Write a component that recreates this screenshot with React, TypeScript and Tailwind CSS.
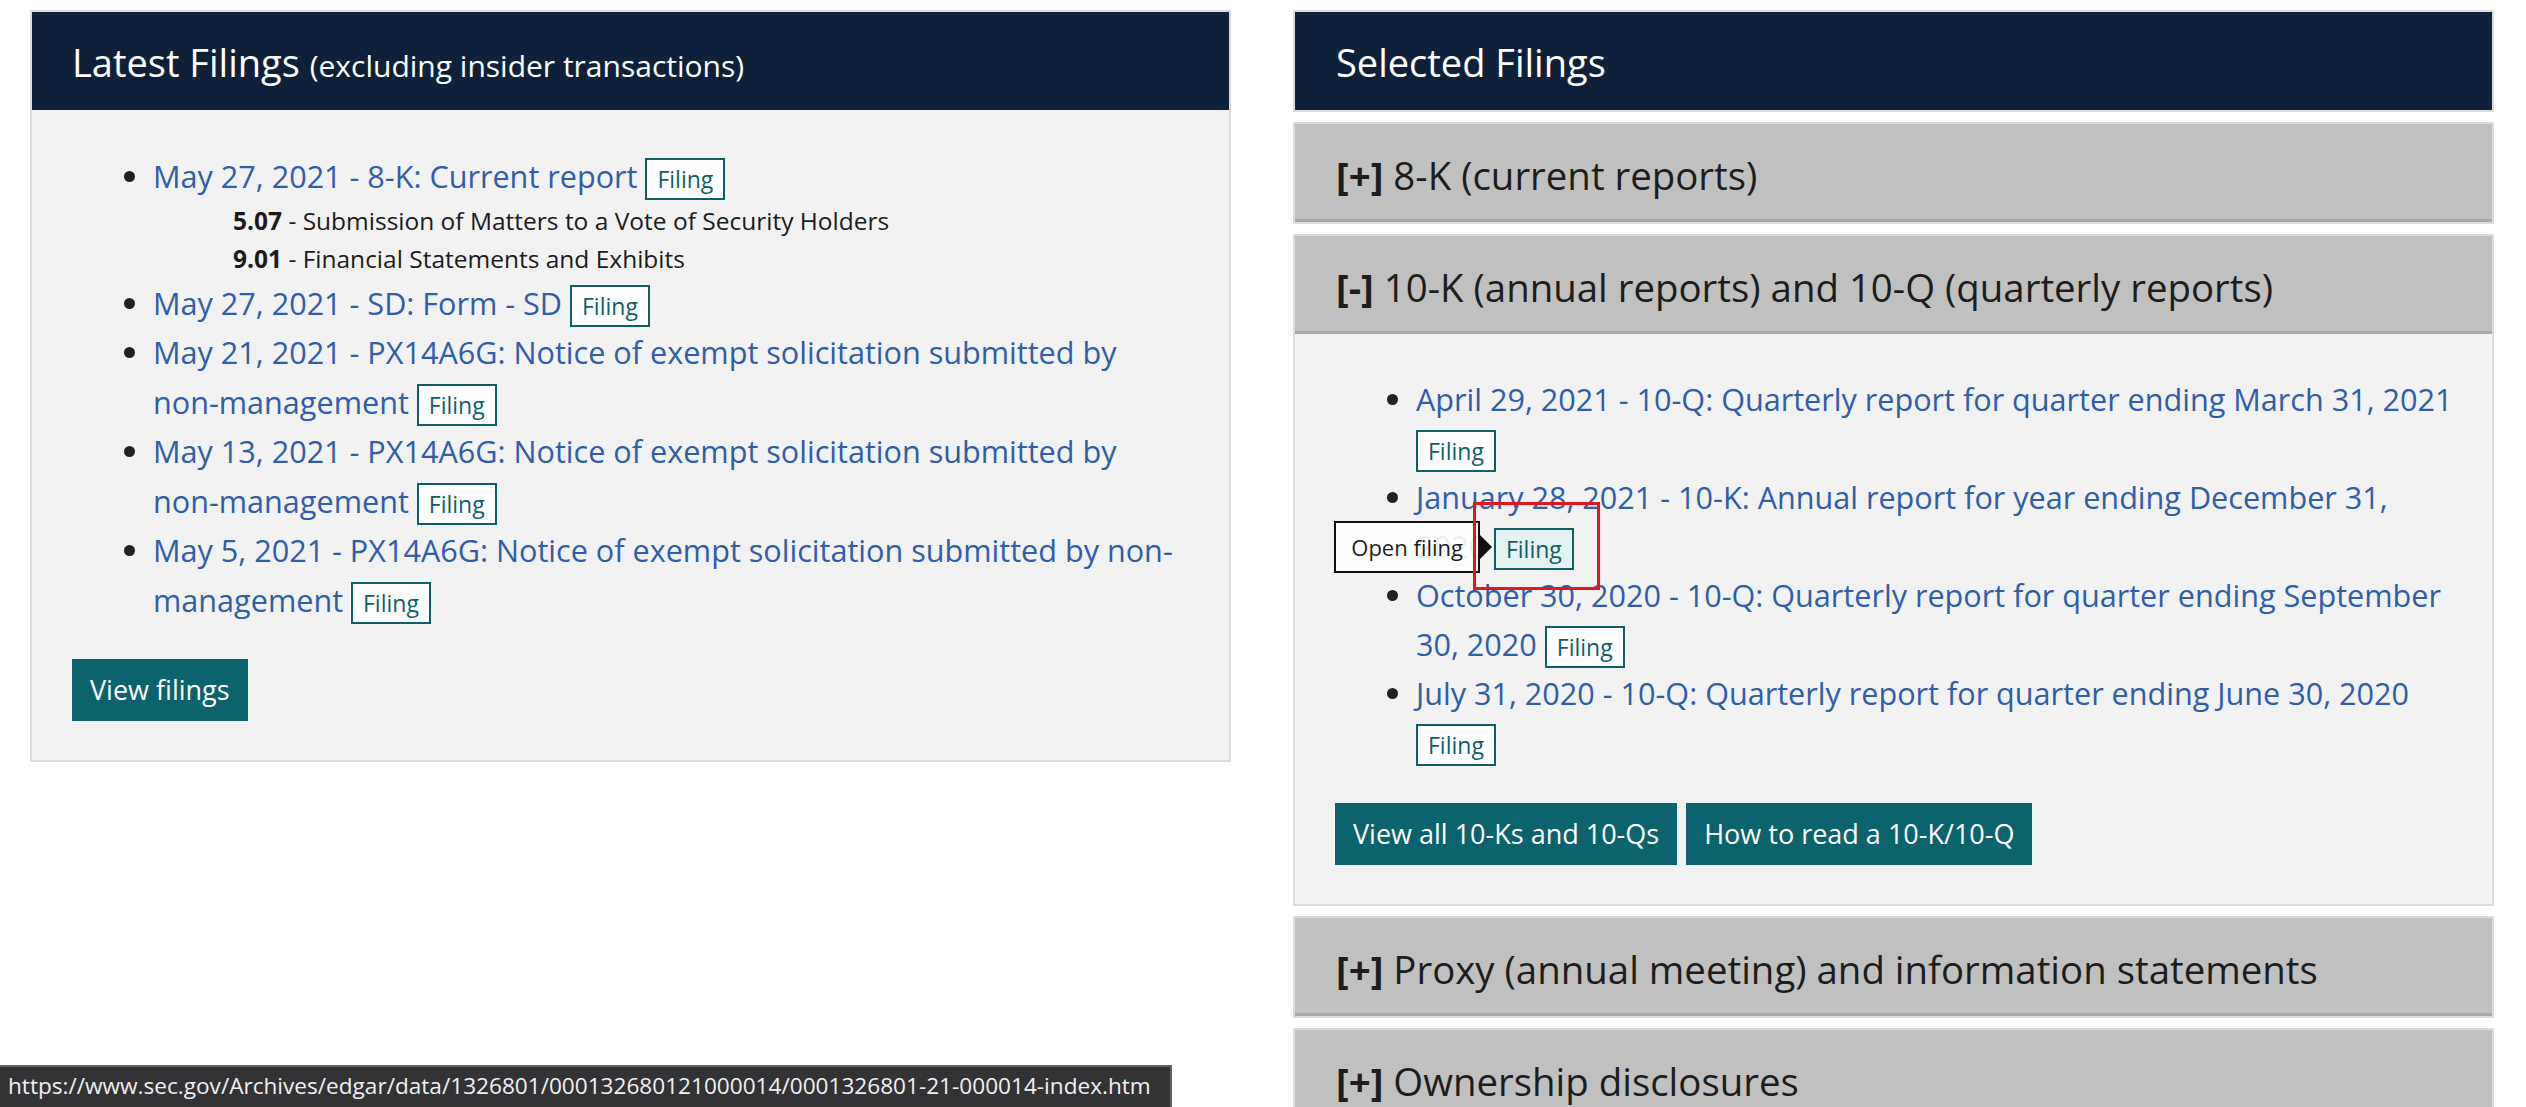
import React from "react";

type Latest = { text: string; items?: [string, string][] };

const latestFilings: Latest[] = [
  {
    text: "May 27, 2021 - 8-K: Current report",
    items: [
      ["5.07", "Submission of Matters to a Vote of Security Holders"],
      ["9.01", "Financial Statements and Exhibits"],
    ],
  },
  { text: "May 27, 2021 - SD: Form - SD" },
  { text: "May 21, 2021 - PX14A6G: Notice of exempt solicitation submitted by non-management" },
  { text: "May 13, 2021 - PX14A6G: Notice of exempt solicitation submitted by non-management" },
  { text: "May 5, 2021 - PX14A6G: Notice of exempt solicitation submitted by non-management" },
];

const annualFilings = [
  { text: "April 29, 2021 - 10-Q: Quarterly report for quarter ending March 31, 2021" },
  { text: "January 28, 2021 - 10-K: Annual report for year ending December 31, 2020", hover: true },
  { text: "October 30, 2020 - 10-Q: Quarterly report for quarter ending September 30, 2020" },
  { text: "July 31, 2020 - 10-Q: Quarterly report for quarter ending June 30, 2020" },
];

function Badge({ hover }: { hover?: boolean }) {
  return (
    <span
      className={`inline-block border-2 border-[#0d5f68] px-[10px] text-[23px] leading-[38px] text-[#0d5f68] ${
        hover ? "bg-[#e5f2f2]" : "bg-white"
      }`}
    >
      Filing
    </span>
  );
}

function HoveredBadge() {
  return (
    <span className="relative inline-block">
      <Badge hover />
      <span className="absolute right-full top-1/2 mr-[14px] -translate-y-1/2 whitespace-nowrap border-2 border-[#111] bg-white/90 px-[15px] text-[22px] leading-[48px] text-[#1d1d1d]">
        Open filing
        <span className="absolute left-full top-1/2 ml-[2px] h-0 w-0 -translate-y-1/2 border-y-[12px] border-l-[12px] border-y-transparent border-l-[#111]" />
      </span>
      <span className="absolute left-[-21px] top-[-20px] h-[88px] w-[127px] border-[3px] border-[#e8141c]" />
    </span>
  );
}

function Button({ children }: { children: React.ReactNode }) {
  return (
    <button className="h-[62px] bg-[#0c626d] px-[18px] text-[27px] text-white">{children}</button>
  );
}

function AccordionHeader({ label, open }: { label: string; open?: boolean }) {
  return (
    <div className="flex h-[98px] items-center border-b-[3px] border-[#a8a8a8] bg-[#c0c0c0] px-[41px] pt-[9px] text-[38.4px] text-[#1d1d1d]">
      <span>
        <b>{open ? "[-]" : "[+]"}</b> {label}
      </span>
    </div>
  );
}

export default function App() {
  return (
    <div className="min-h-screen bg-white font-['Open_Sans',sans-serif]">
      <div className="flex items-start gap-[62px] pl-[30px] pt-[10px]">
        {/* Latest filings */}
        <div className="w-[1201px] border-2 border-[#dcdcdc] bg-[#f2f2f2]">
          <div className="flex h-[98px] items-center bg-[#0f213a] px-[40px] pt-[3px] text-white">
            <h2 className="text-[38px]">
              Latest Filings <span className="text-[30px]">(excluding insider transactions)</span>
            </h2>
          </div>
          <div className="pb-[39px] pl-[40px] pr-[43px] pt-[42px]">
            <ul className="mb-[34px] list-disc pl-[81px] text-[30.6px] leading-[49.5px] text-[#222]">
              {latestFilings.map((f) => (
                <li key={f.text}>
                  <a className="text-[#2f5eaa]">{f.text}</a> <Badge />
                  {f.items && (
                    <ul className="list-none pl-[80px] text-[24.5px] leading-[38.5px] text-[#1b1b1b]">
                      {f.items.map(([code, desc]) => (
                        <li key={code}>
                          <b>{code}</b> - {desc}
                        </li>
                      ))}
                    </ul>
                  )}
                </li>
              ))}
            </ul>
            <Button>View filings</Button>
          </div>
        </div>

        {/* Selected filings */}
        <div className="flex w-[1201px] flex-col gap-[10px]">
          <div className="border-2 border-[#dcdcdc]">
            <div className="flex h-[98px] items-center bg-[#0f213a] px-[41px] pt-[3px] text-[38px] text-white">
              Selected Filings
            </div>
          </div>
          <div className="border-2 border-[#dcdcdc]">
            <AccordionHeader label="8-K (current reports)" />
          </div>
          <div className="border-2 border-[#dcdcdc]">
            <AccordionHeader open label="10-K (annual reports) and 10-Q (quarterly reports)" />
            <div className="bg-[#f2f2f2] pb-[39px] pl-[40px] pr-[36px] pt-[41px]">
              <ul className="mb-[36px] list-disc pl-[81px] text-[30.6px] leading-[49px] text-[#222]">
                {annualFilings.map((f) => (
                  <li key={f.text}>
                    <a className="text-[#2f5eaa]">{f.text}</a> {f.hover ? <HoveredBadge /> : <Badge />}
                  </li>
                ))}
              </ul>
              <div className="flex gap-[9px]">
                <Button>View all 10-Ks and 10-Qs</Button>
                <Button>How to read a 10-K/10-Q</Button>
              </div>
            </div>
          </div>
          <div className="border-2 border-[#dcdcdc]">
            <AccordionHeader label="Proxy (annual meeting) and information statements" />
          </div>
          <div className="border-2 border-[#dcdcdc]">
            <AccordionHeader label="Ownership disclosures" />
          </div>
        </div>
      </div>

      {/* browser status bar */}
      <div className="fixed bottom-0 left-0 h-[42px] w-[1172px] overflow-hidden whitespace-nowrap border-r-2 border-t-2 border-[#5f5f5f] bg-[#333336] pl-[8px] text-[22.6px] leading-[38px] text-[#f0f0f0]">
        https://www.sec.gov/Archives/edgar/data/1326801/000132680121000014/0001326801-21-000014-index.htm
      </div>
    </div>
  );
}
